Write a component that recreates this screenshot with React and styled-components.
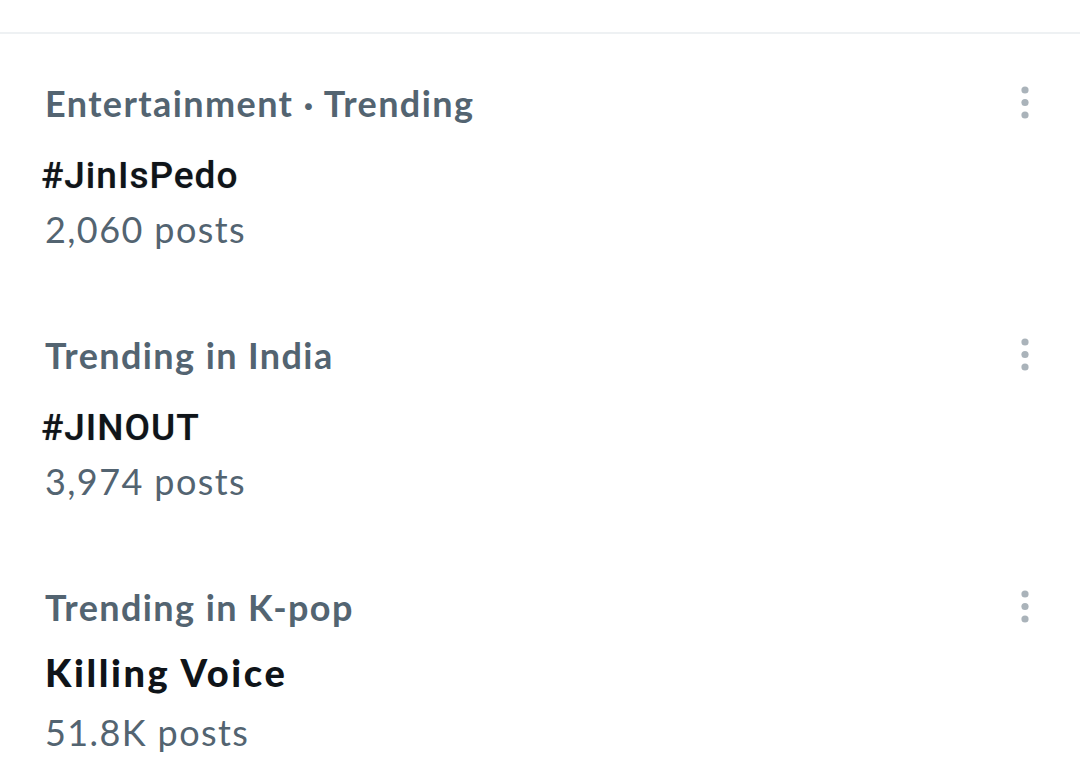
import React from 'react'
import styled, { createGlobalStyle } from 'styled-components'

const GlobalStyle = createGlobalStyle`
  html, body {
    margin: 0;
    padding: 0;
    background: #fff;
  }
`

const Page = styled.div`
  width: 1080px;
  min-height: 784px;
  background: #fff;
  overflow: hidden;
`

const TopBar = styled.div`
  height: 32px;
  border-bottom: 2px solid #eef1f3;
`

const List = styled.div`
  display: flex;
  flex-direction: column;
  gap: 86px;
  padding: 49px 0 0 45px;
`

const Item = styled.div`
  display: flex;
  flex-direction: column;
`

const Header = styled.div`
  display: flex;
  align-items: center;
  justify-content: space-between;
  padding-right: 50px;
`

const Category = styled.div`
  font-family: Lato, "Noto Sans", sans-serif;
  font-weight: 700;
  font-size: 36px;
  line-height: 40px;
  letter-spacing: 1.4px;
  color: #536471;
`

const Title = styled.div`
  margin-top: ${p => (p.$tag ? '32px' : '24px')};
  margin-left: ${p => (p.$tag ? '-4px' : '0')};
  font-family: ${p => (p.$tag ? 'Roboto, "Liberation Sans", sans-serif' : 'Lato, "Noto Sans", sans-serif')};
  font-weight: ${p => (p.$tag ? 500 : 900)};
  font-size: ${p => (p.$tag ? '37px' : '38px')};
  line-height: 42px;
  letter-spacing: ${p => (p.$tag ? '1px' : '2.6px')};
  color: #0f1419;
  text-shadow: ${p => (p.$tag ? '0 0 1px rgba(0,0,0,0.35)' : 'none')};
`

const Posts = styled.div`
  margin-top: ${p => (p.$tag ? '12px' : '19px')};
  font-family: Lato, "Noto Sans", sans-serif;
  font-weight: 400;
  font-size: 36px;
  line-height: 40px;
  letter-spacing: 1.4px;
  color: #536471;
`

const Dots = () => (
  <svg width="10" height="36" viewBox="0 0 10 36">
    <circle cx="5" cy="5" r="3.6" fill="#aab3ba" />
    <circle cx="5" cy="17.5" r="3.6" fill="#aab3ba" />
    <circle cx="5" cy="30" r="3.6" fill="#aab3ba" />
  </svg>
)

const trends = [
  { category: 'Entertainment · Trending', title: '#JinIsPedo', posts: '2,060 posts', tag: true },
  { category: 'Trending in India', title: '#JINOUT', posts: '3,974 posts', tag: true },
  { category: 'Trending in K-pop', title: 'Killing Voice', posts: '51.8K posts', tag: false },
]

export default function App() {
  return (
    <Page>
      <GlobalStyle />
      <TopBar />
      <List>
        {trends.map(t => (
          <Item key={t.title}>
            <Header>
              <Category>{t.category}</Category>
              <Dots />
            </Header>
            <Title $tag={t.tag}>{t.title}</Title>
            <Posts $tag={t.tag}>{t.posts}</Posts>
          </Item>
        ))}
      </List>
    </Page>
  )
}
